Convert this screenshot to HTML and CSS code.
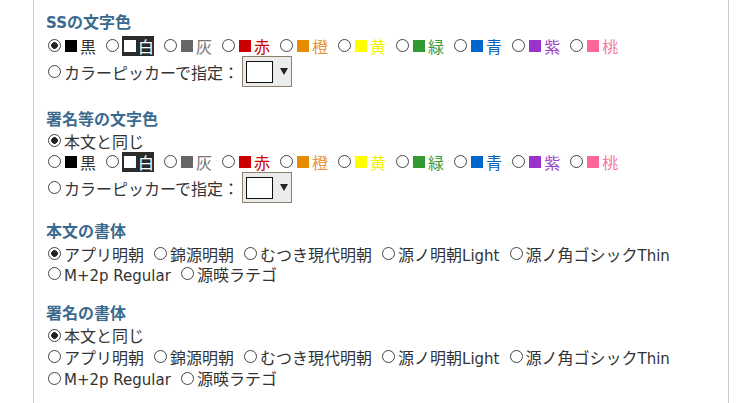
FILE: index.html
```html
<!DOCTYPE html>
<html lang="ja">

<head>
    <meta charset="UTF-8">
    <meta name="viewport" content="width=device-width, initial-scale=1.0">
    <title>表示設定</title>
    <link rel="stylesheet" href="styles.css">
</head>

<body>
    <div class="panel">
        <!-- SS text colour -->
        <div class="section sec-ss">
            <h3><span class="en">SS</span>の文字色</h3>
            <div class="row">
                <label class="opt"><input type="radio" name="ssColor" checked><span class="sw sw-black"></span>黒</label>
                <label class="opt"><input type="radio" name="ssColor"><span class="inv"><span class="sw sw-white"></span>白</span></label>
                <label class="opt c-gray"><input type="radio" name="ssColor"><span class="sw sw-gray"></span>灰</label>
                <label class="opt c-red"><input type="radio" name="ssColor"><span class="sw sw-red"></span>赤</label>
                <label class="opt c-orange"><input type="radio" name="ssColor"><span class="sw sw-orange"></span>橙</label>
                <label class="opt c-yellow"><input type="radio" name="ssColor"><span class="sw sw-yellow"></span>黄</label>
                <label class="opt c-green"><input type="radio" name="ssColor"><span class="sw sw-green"></span>緑</label>
                <label class="opt c-blue"><input type="radio" name="ssColor"><span class="sw sw-blue"></span>青</label>
                <label class="opt c-purple"><input type="radio" name="ssColor"><span class="sw sw-purple"></span>紫</label>
                <label class="opt c-pink"><input type="radio" name="ssColor"><span class="sw sw-pink"></span>桃</label>
            </div>
            <div class="row row-picker">
                <label class="opt"><input type="radio" name="ssColor">カラーピッカーで指定：</label>
                <span class="picker"><span class="box"></span><span class="arrow"></span></span>
            </div>
        </div>

        <!-- signature text colour -->
        <div class="section sec-sign">
            <h3>署名等の文字色</h3>
            <div class="row">
                <label class="opt"><input type="radio" name="signColor" checked>本文と同じ</label>
            </div>
            <div class="row">
                <label class="opt"><input type="radio" name="signColor"><span class="sw sw-black"></span>黒</label>
                <label class="opt"><input type="radio" name="signColor"><span class="inv"><span class="sw sw-white"></span>白</span></label>
                <label class="opt c-gray"><input type="radio" name="signColor"><span class="sw sw-gray"></span>灰</label>
                <label class="opt c-red"><input type="radio" name="signColor"><span class="sw sw-red"></span>赤</label>
                <label class="opt c-orange"><input type="radio" name="signColor"><span class="sw sw-orange"></span>橙</label>
                <label class="opt c-yellow"><input type="radio" name="signColor"><span class="sw sw-yellow"></span>黄</label>
                <label class="opt c-green"><input type="radio" name="signColor"><span class="sw sw-green"></span>緑</label>
                <label class="opt c-blue"><input type="radio" name="signColor"><span class="sw sw-blue"></span>青</label>
                <label class="opt c-purple"><input type="radio" name="signColor"><span class="sw sw-purple"></span>紫</label>
                <label class="opt c-pink"><input type="radio" name="signColor"><span class="sw sw-pink"></span>桃</label>
            </div>
            <div class="row row-picker">
                <label class="opt"><input type="radio" name="signColor">カラーピッカーで指定：</label>
                <span class="picker"><span class="box"></span><span class="arrow"></span></span>
            </div>
        </div>

        <!-- body font -->
        <div class="section sec-font">
            <h3>本文の書体</h3>
            <div class="row">
                <label class="opt"><input type="radio" name="bodyFont" checked>アプリ明朝</label>
                <label class="opt"><input type="radio" name="bodyFont">錦源明朝</label>
                <label class="opt"><input type="radio" name="bodyFont">むつき現代明朝</label>
                <label class="opt"><input type="radio" name="bodyFont"><span>源ノ明朝<span class="en">Light</span></span></label>
                <label class="opt"><input type="radio" name="bodyFont"><span>源ノ角ゴシック<span class="en">Thin</span></span></label>
            </div>
            <div class="row">
                <label class="opt"><input type="radio" name="bodyFont"><span><span class="en">M+2p Regular</span></span></label>
                <label class="opt"><input type="radio" name="bodyFont">源暎ラテゴ</label>
            </div>
        </div>

        <!-- signature font -->
        <div class="section sec-signfont">
            <h3>署名の書体</h3>
            <div class="row">
                <label class="opt"><input type="radio" name="signFont" checked>本文と同じ</label>
            </div>
            <div class="row">
                <label class="opt"><input type="radio" name="signFont">アプリ明朝</label>
                <label class="opt"><input type="radio" name="signFont">錦源明朝</label>
                <label class="opt"><input type="radio" name="signFont">むつき現代明朝</label>
                <label class="opt"><input type="radio" name="signFont"><span>源ノ明朝<span class="en">Light</span></span></label>
                <label class="opt"><input type="radio" name="signFont"><span>源ノ角ゴシック<span class="en">Thin</span></span></label>
            </div>
            <div class="row">
                <label class="opt"><input type="radio" name="signFont"><span><span class="en">M+2p Regular</span></span></label>
                <label class="opt"><input type="radio" name="signFont">源暎ラテゴ</label>
            </div>
        </div>
    </div>
</body>

</html>
```

FILE: styles.css
```css
/* Global styles */
body {
    margin: 0;
    font-family: "Noto Sans CJK JP", sans-serif;
    font-size: 16px;
    color: #333;
    background-color: #fff;
}

.en {
    font-family: "DejaVu Sans", "Noto Sans CJK JP", sans-serif;
    font-size: 15px;
    line-height: 1;
}

.panel {
    box-sizing: border-box;
    width: 696px;
    min-height: 403px;
    margin-left: 33px;
    padding: 10px 12px 0;
    border-left: 1px solid #ccc;
    border-right: 1px solid #ccc;
}

/* Sections */
.section {
    margin-bottom: 20px;
}

.section h3 {
    margin: 0 0 1px;
    font-size: 16px;
    line-height: 22px;
    font-weight: bold;
    color: #3a6a8e;
}

.sec-ss h3 {
    margin-bottom: 3px;
}

.sec-sign {
    margin-bottom: 16px;
}

.sec-font {
    margin-bottom: 17px;
}

.sec-font h3 {
    margin-bottom: 2.5px;
}

.sec-signfont h3 {
    margin-bottom: 1.75px;
}

.row {
    display: flex;
    align-items: center;
    column-gap: 8px;
    height: 21px;
    white-space: nowrap;
}

.sec-font .row {
    height: 20px;
}

.sec-signfont .row {
    height: 21.5px;
}

.row-picker {
    height: 31px;
}

/* Radio options */
.opt {
    display: inline-flex;
    align-items: center;
    line-height: 20px;
}

.opt input[type="radio"] {
    appearance: none;
    -webkit-appearance: none;
    box-sizing: border-box;
    width: 13px;
    height: 13px;
    margin: 0 3px 0 2px;
    border: 1px solid #444;
    border-radius: 50%;
    background-color: #fff;
}

.opt input[type="radio"]:checked {
    background: radial-gradient(circle, #222 0, #222 3px, #fff 3.6px);
}

/* Colour swatches */
.sw {
    display: inline-block;
    width: 12px;
    height: 12px;
    margin: 0 3px 0 1px;
}

.inv {
    display: inline-flex;
    align-items: center;
    height: 20px;
    padding-left: 1px;
    background-color: #2b2b2b;
    color: #fff;
}

.inv .sw {
    margin-right: 2px;
}

.sw-black { background-color: #000; }
.sw-white { background-color: #fff; }
.sw-gray { background-color: #666; }
.sw-red { background-color: #cc0000; }
.sw-orange { background-color: #e68a00; }
.sw-yellow { background-color: #ffff00; }
.sw-green { background-color: #339933; }
.sw-blue { background-color: #0066cc; }
.sw-purple { background-color: #9933cc; }
.sw-pink { background-color: #ff6699; }

.c-gray { color: #777; }
.c-red { color: #cc0000; }
.c-orange { color: #e8923a; }
.c-yellow { color: #f2f200; }
.c-green { color: #3c9a3c; }
.c-blue { color: #0a62b8; }
.c-purple { color: #9b45c8; }
.c-pink { color: #f478a0; }

/* Colour picker */
.picker {
    display: inline-flex;
    align-items: center;
    box-sizing: border-box;
    width: 50px;
    height: 31px;
    margin-left: -5px;
    padding-left: 3px;
    border: 1px solid #8c7f70;
    background-color: #ececec;
}

.picker .box {
    box-sizing: border-box;
    width: 27px;
    height: 22px;
    border: 1px solid #111;
    background-color: #fff;
}

.picker .arrow {
    width: 0;
    height: 0;
    margin-left: 7px;
    border-top: 7px solid #222;
    border-left: 4px solid transparent;
    border-right: 4px solid transparent;
}
```
